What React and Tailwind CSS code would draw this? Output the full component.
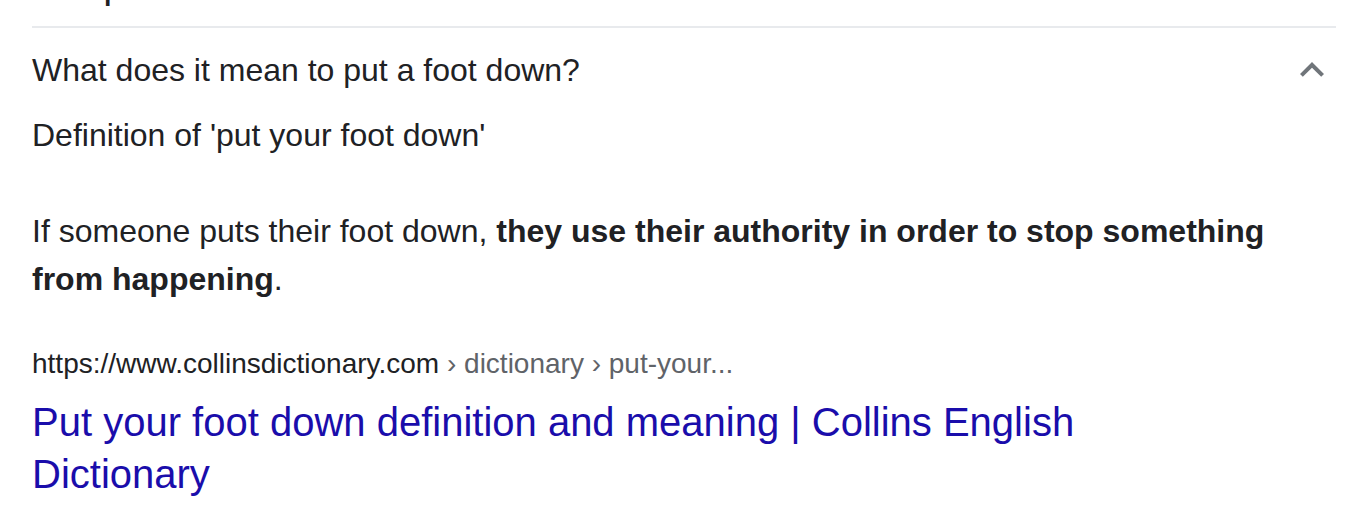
import React from 'react';

const ExpandLess = () => (
  <svg width="48" height="48" viewBox="0 0 24 24" className="shrink-0" fill="#70757a">
    <path d="M12 8l-6 6 1.41 1.41L12 10.83l4.59 4.58L18 14z" />
  </svg>
);

const App = () => {
  return (
    <div
      className="w-full h-[512px] overflow-hidden bg-white pl-[32px] pr-[12px] text-[#202124]"
      style={{ fontFamily: '"Liberation Sans", Arial, sans-serif' }}
    >
      {/* Section heading (scrolled mostly out of view) */}
      <div className="-mt-[42px] text-[40px] leading-[52px]">People also ask</div>
      <div className="mt-[16px] h-[2px] bg-[#e8eaed]"></div>

      {/* Question row */}
      <div className="h-[84px] flex items-center justify-between">
        <div className="text-[32px] leading-[40px]">What does it mean to put a foot down?</div>
        <ExpandLess />
      </div>

      {/* Answer */}
      <div className="-mt-[1px] text-[32px] leading-[48px]">
        <div>Definition of 'put your foot down'</div>
        <div className="h-[48px]"></div>
        <div>
          If someone puts their foot down,{' '}
          <b className="font-bold">they use their authority in order to stop something from happening</b>.
        </div>
      </div>

      {/* Source */}
      <div className="mt-[41px] text-[28px] leading-[40px]">
        https://www.collinsdictionary.com
        <span className="text-[#5f6368]"> › dictionary › put-your...</span>
      </div>
      <div className="mt-[12px] max-w-[1200px] text-[40px] leading-[52px] text-[#1a0dab]">
        Put your foot down definition and meaning | Collins English Dictionary
      </div>
    </div>
  );
};

export default App;
